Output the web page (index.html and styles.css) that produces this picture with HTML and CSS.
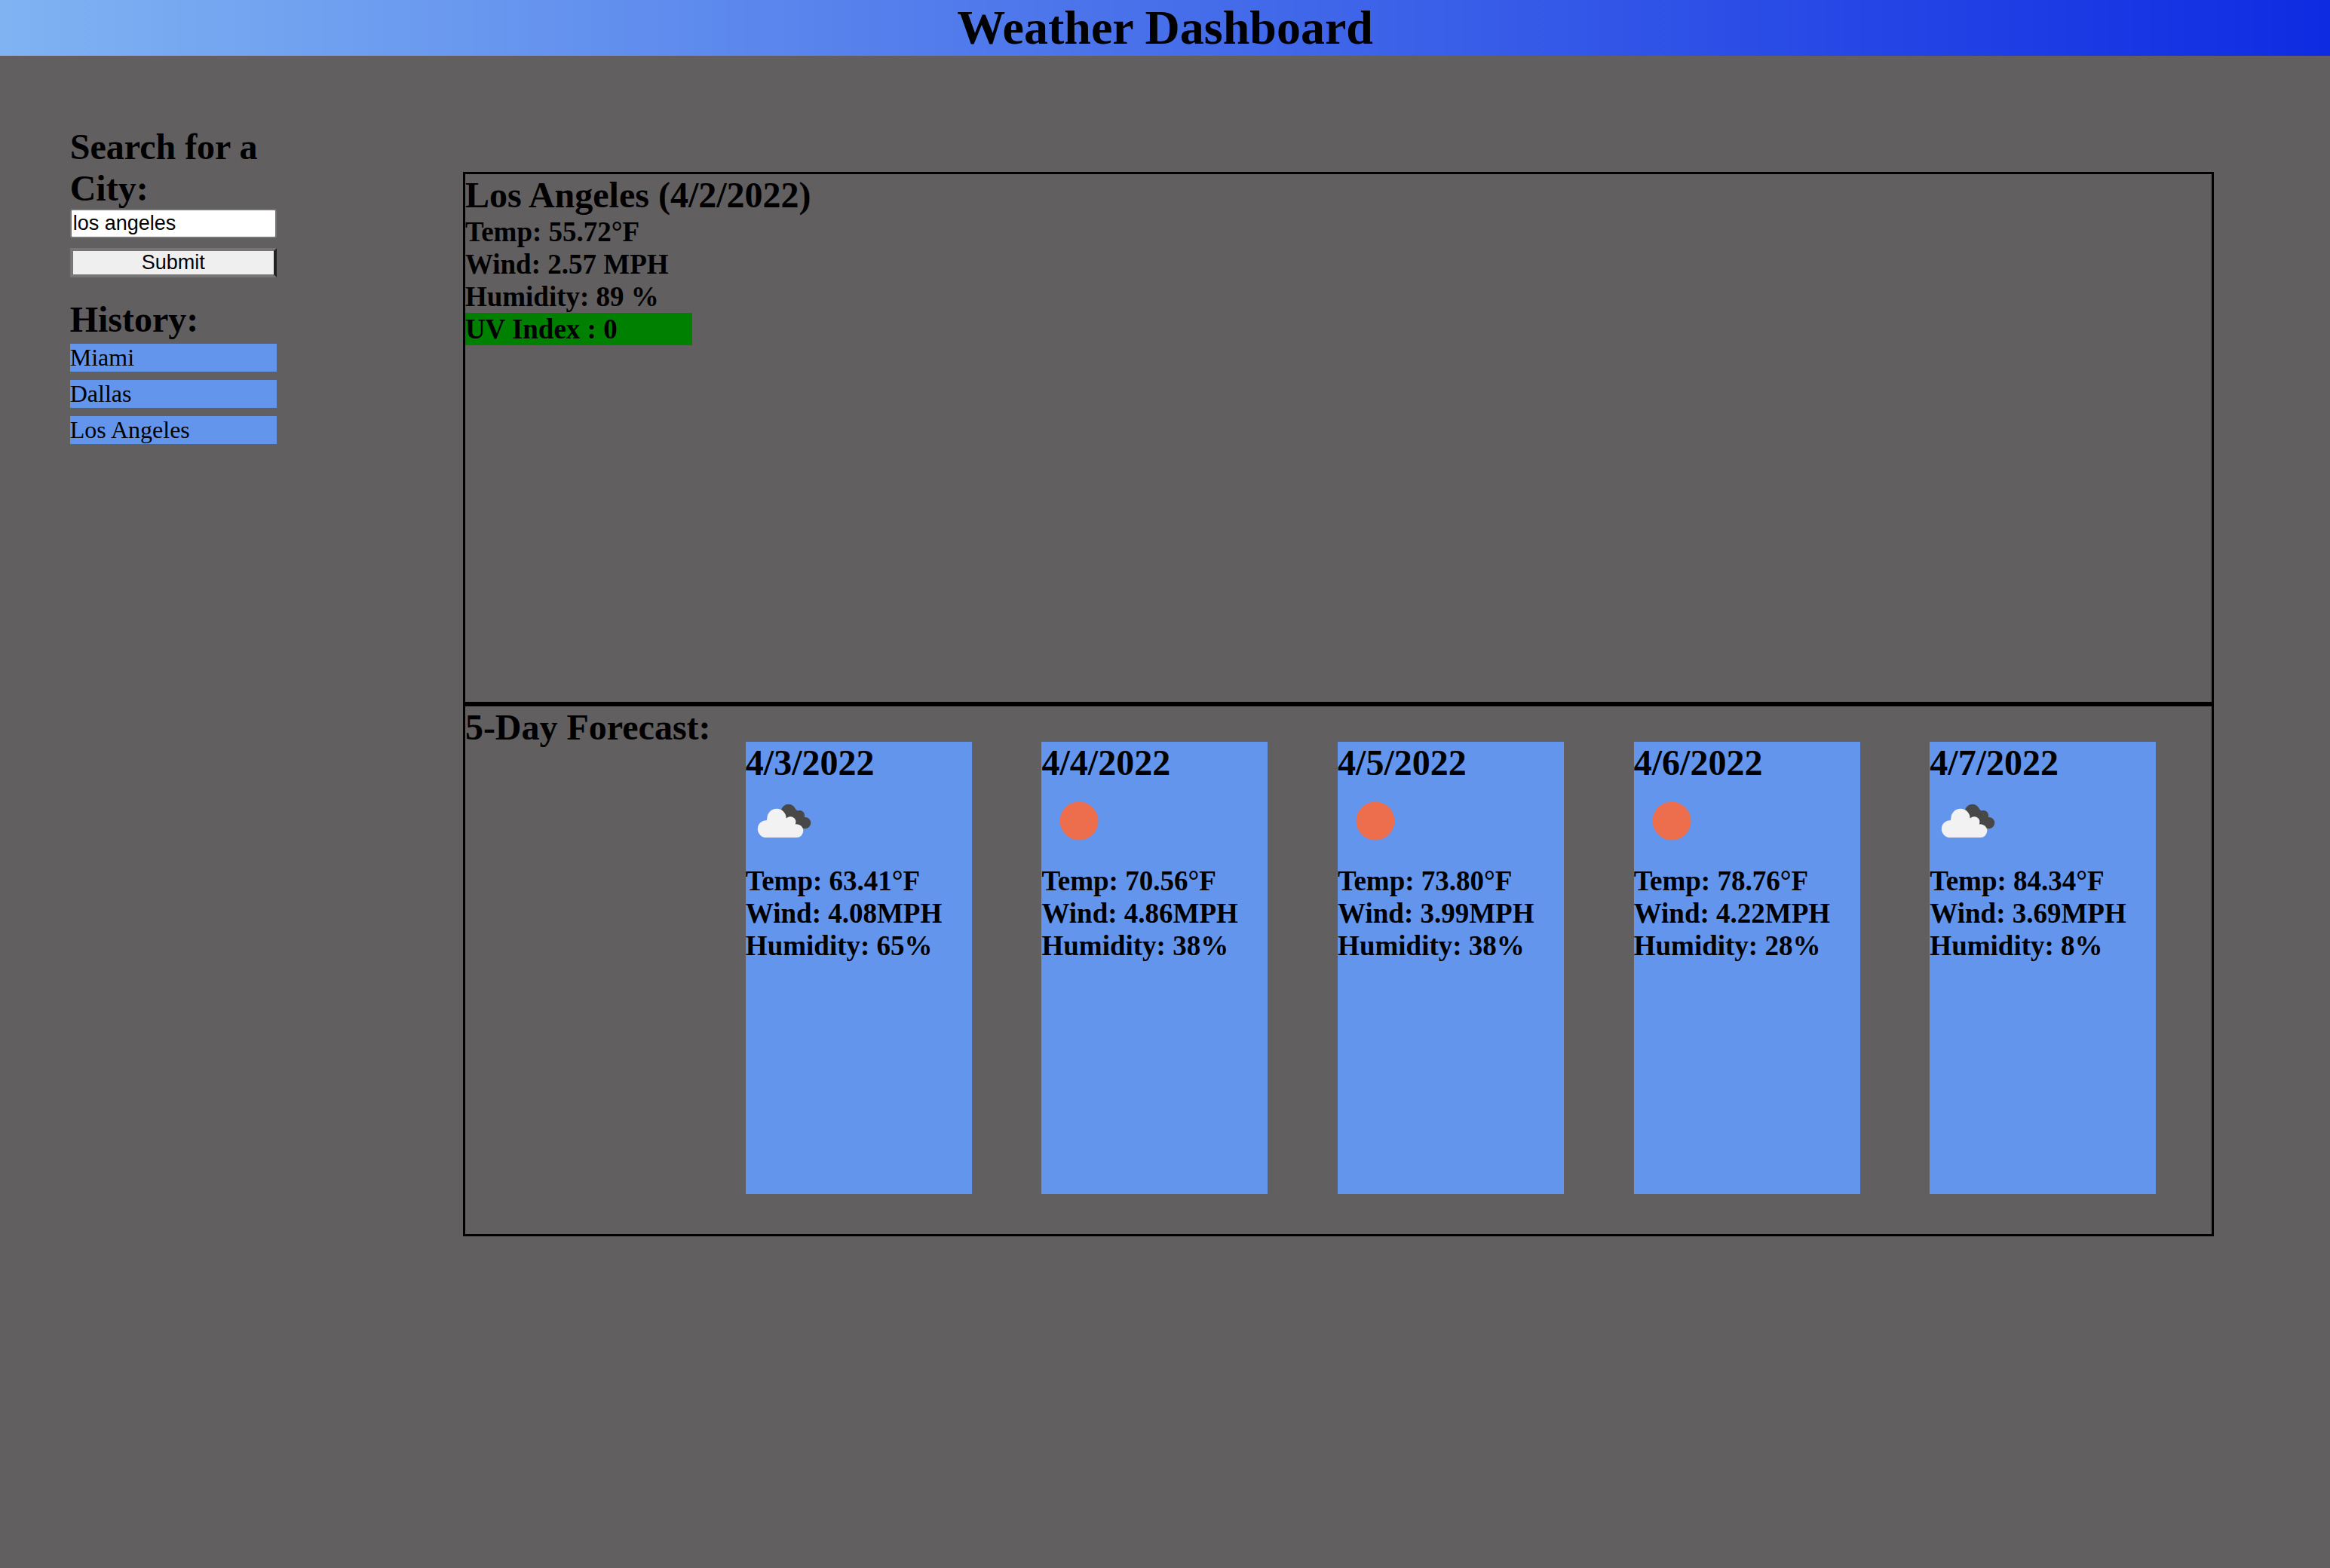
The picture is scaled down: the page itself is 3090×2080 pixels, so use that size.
FILE: index.html
```html
<!DOCTYPE html>
<html lang="en">
<head>
  <meta charset="utf-8">
  <meta name="viewport" content="width=device-width, initial-scale=1">
  <title>Weather Dashboard</title>
  <link rel="stylesheet" href="styles.css">
</head>
<body>
  <svg class="sprite" aria-hidden="true">
    <symbol id="clouds" viewBox="0 0 100 100">
      <g fill="#484849">
        <circle cx="56.7" cy="37.7" r="10"/>
        <circle cx="71.5" cy="42.6" r="6.6"/>
        <circle cx="78.6" cy="52.6" r="7.7"/>
        <path d="M48 36 L60 30 L76 42 L82 50 L78 60 L60 60 Z"/>
      </g>
      <g fill="#f2f2f2">
        <circle cx="41" cy="46.3" r="12.6"/>
        <circle cx="27.2" cy="60.6" r="11.4"/>
        <circle cx="59.2" cy="51.4" r="7.2"/>
        <circle cx="67.4" cy="63.1" r="8.9"/>
        <path d="M27 72 H67.4 V56 L60 48 L42 44 L28.600 46 L27 52 Z"/>
      </g>
    </symbol>
    <symbol id="sun" viewBox="0 0 100 100">
      <circle cx="50" cy="50" r="25.5" fill="#ec6e4c"/>
    </symbol>
  </svg>

  <header class="banner">
    <h1>Weather Dashboard</h1>
  </header>

  <main class="layout">
    <aside class="sidebar">
      <form class="search">
        <h2><label for="city">Search for a City:</label></h2>
        <input class="search-input" id="city" type="text" value="los angeles">
        <button class="search-button" type="button">Submit</button>
      </form>
      <h2>History:</h2>
      <ul class="history">
        <li><button class="history-item" type="button">Miami</button></li>
        <li><button class="history-item" type="button">Dallas</button></li>
        <li><button class="history-item" type="button">Los Angeles</button></li>
      </ul>
    </aside>

    <div class="results">
      <section class="panel">
        <h2>Los Angeles (4/2/2022)</h2>
        <h3>Temp: 55.72°F</h3>
        <h3>Wind: 2.57 MPH</h3>
        <h3>Humidity: 89 %</h3>
        <h3 class="uv-index">UV Index : 0</h3>
      </section>

      <section class="panel forecast">
        <h2>5-Day Forecast:</h2>
        <article class="day">
          <h2>4/3/2022</h2>
          <svg class="day-icon" role="img" aria-label="Broken clouds"><use href="#clouds"/></svg>
          <h3>Temp: 63.41°F</h3>
          <h3>Wind: 4.08MPH</h3>
          <h3>Humidity: 65%</h3>
        </article>
        <article class="day">
          <h2>4/4/2022</h2>
          <svg class="day-icon" role="img" aria-label="Clear sky"><use href="#sun"/></svg>
          <h3>Temp: 70.56°F</h3>
          <h3>Wind: 4.86MPH</h3>
          <h3>Humidity: 38%</h3>
        </article>
        <article class="day">
          <h2>4/5/2022</h2>
          <svg class="day-icon" role="img" aria-label="Clear sky"><use href="#sun"/></svg>
          <h3>Temp: 73.80°F</h3>
          <h3>Wind: 3.99MPH</h3>
          <h3>Humidity: 38%</h3>
        </article>
        <article class="day">
          <h2>4/6/2022</h2>
          <svg class="day-icon" role="img" aria-label="Clear sky"><use href="#sun"/></svg>
          <h3>Temp: 78.76°F</h3>
          <h3>Wind: 4.22MPH</h3>
          <h3>Humidity: 28%</h3>
        </article>
        <article class="day">
          <h2>4/7/2022</h2>
          <svg class="day-icon" role="img" aria-label="Broken clouds"><use href="#clouds"/></svg>
          <h3>Temp: 84.34°F</h3>
          <h3>Wind: 3.69MPH</h3>
          <h3>Humidity: 8%</h3>
        </article>
      </section>
    </div>
  </main>
</body>
</html>
```

FILE: styles.css
```css
* {
  margin: 0;
  padding: 0;
  box-sizing: border-box;
}

body {
  background-color: #615f60;
  color: #000;
  font-family: "Liberation Serif", "Times New Roman", serif;
  font-size: 32px;
  line-height: 37px;
}

h1 {
  font-size: 64px;
  line-height: 74px;
}

h2 {
  font-size: 48px;
  line-height: normal;
}

h3 {
  font-size: 37px;
  line-height: 43px;
}

.sprite {
  display: none;
}

.banner {
  background: linear-gradient(to right, #7fb3f2, #0f2be2);
  text-align: center;
}

.layout {
  display: flex;
  align-items: flex-start;
}

/* Search form and past searches */
.sidebar {
  flex: 0 0 274px;
  min-width: 0;
  margin: 3%;
}

.search {
  display: flex;
  flex-direction: column;
  margin-bottom: 28px;
}

.search-input,
.search-button {
  width: 100%;
  height: 39px;
  font-family: "Liberation Sans", Arial, sans-serif;
  font-size: 27px;
  line-height: 31px;
  color: #000;
}

.search-input {
  margin-bottom: 13px;
  padding: 0 2px;
  border: 2px solid #767676;
  border-radius: 3px;
  background-color: #fff;
}

.search-button {
  border: 4px solid #767676;
  border-right-color: #222;
  background-color: #efefef;
}

.history {
  display: flex;
  flex-direction: column;
  gap: 11px;
  padding-top: 5px;
  list-style: none;
}

.history-item {
  display: block;
  width: 100%;
  border: 0;
  background-color: cornflowerblue;
  color: inherit;
  font: inherit;
  text-align: left;
}

/* Current weather and forecast */
.results {
  flex: 1;
  margin: 154px 5%;
}

.panel {
  min-height: 706px;
  border: 3px solid #000;
}

.uv-index {
  width: 13%;
  background-color: green;
}

.forecast {
  display: flex;
  align-items: flex-start;
}

.day {
  flex: 0 0 300px;
  min-height: 600px;
  margin: 47px 2%;
  background-color: cornflowerblue;
}

.day-icon {
  display: block;
  width: 100px;
  height: 100px;
  margin-bottom: 8px;
}
```
